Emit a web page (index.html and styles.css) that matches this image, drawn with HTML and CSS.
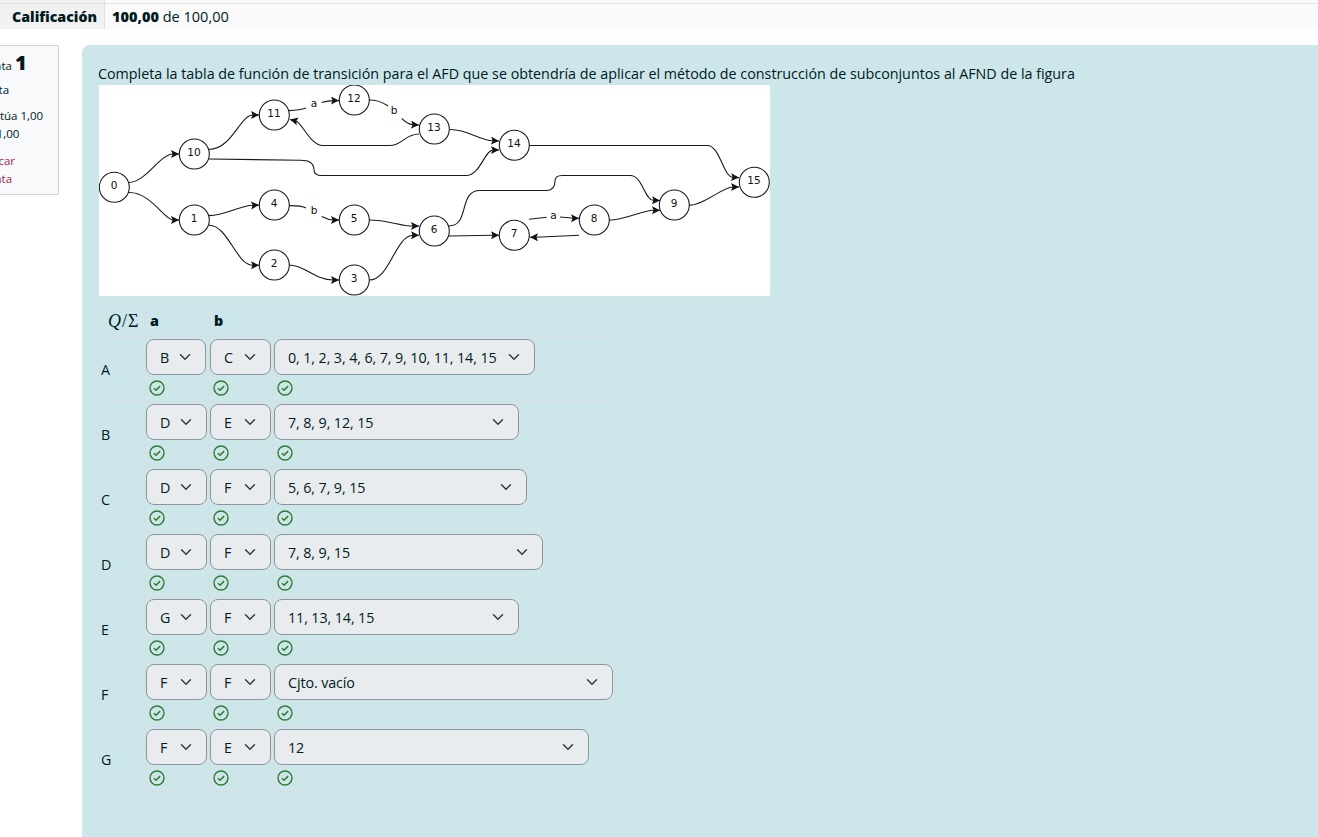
FILE: index.html
```html
<!DOCTYPE html>
<html lang="es">
<head>
    <meta charset="UTF-8">
    <meta name="viewport" content="width=device-width, initial-scale=1.0">
    <title>Calificación</title>
    <link rel="stylesheet" href="styles.css">
</head>
<body>
    <svg class="defs" width="0" height="0" aria-hidden="true">
        <symbol id="ok" viewBox="0 0 16 16">
            <circle cx="8" cy="8" r="7" fill="none" stroke="#357a32" stroke-width="1.4"/>
            <path d="M4.9 8.3 7 10.2 11.1 6.1" fill="none" stroke="#357a32" stroke-width="1.5"/>
        </symbol>
    </svg>

    <div class="summary">
        <div class="summary-row summary-cut">
            <div class="summary-head"></div>
            <div class="summary-value"></div>
        </div>
        <div class="summary-row">
            <div class="summary-head"><b>Calificación</b></div>
            <div class="summary-value"><b>100,00</b> de 100,00</div>
        </div>
    </div>

    <div class="main">
        <div class="info">
            <p class="info-no">Pregunta <b>1</b></p>
            <p>Correcta</p>
            <p>Se puntúa 1,00<br>sobre 1,00</p>
            <p class="flag"><span class="flag-first">Marcar</span><br>pregunta</p>
        </div>

        <div class="formulation">
            <p class="qtext">Completa la tabla de función de transición para el AFD que se obtendría de aplicar el método de construcción de subconjuntos al AFND de la figura</p>

            <svg class="graph" viewBox="99 85 671 211" width="671" height="211">
                <defs>
                    <marker id="arrow" markerUnits="userSpaceOnUse" markerWidth="9" markerHeight="9" refX="8" refY="4" orient="auto">
                        <path d="M0 0 8 4 0 8 1.6 4z" fill="#111"/>
                    </marker>
                </defs>
                <g class="edges">
                    <path marker-end="url(#arrow)" d="M129 182.5C146 182 160 154 173 154H179"/>
                    <path marker-end="url(#arrow)" d="M129 192.5C150 192 165 220 173 220H179"/>
                    <path marker-end="url(#arrow)" d="M209 149.5C232 149 240 115 253 115H259"/>
                    <path marker-end="url(#arrow)" d="M209 159 300 160.3Q314 160 314 170Q314 175.5 322 175.5H467C480 175 485 150 493 150H499"/>
                    <path d="M289 110.6Q300 110 306 108"/>
                    <path marker-end="url(#arrow)" d="M321.6 102.6Q328 100.6 334 100.6H339"/>
                    <path d="M369 100C380 100 385 104 388 106"/>
                    <path marker-end="url(#arrow)" d="M401.7 118.3Q407 124 413 124.7L419 125"/>
                    <path marker-end="url(#arrow)" d="M419 134C405 134 402 145.5 390 145.5H323C310 145 303 124 296 121L290 119.5"/>
                    <path marker-end="url(#arrow)" d="M450 129.5C467 129 480 140.6 493 140.7L499 141"/>
                    <path marker-end="url(#arrow)" d="M529 145.5H707C720 145 723 177 733 177.3L739 177.6"/>
                    <path marker-end="url(#arrow)" d="M209 215.6C225 215.6 240 205.5 253 205.3L259 205"/>
                    <path marker-end="url(#arrow)" d="M209 225.3C228 225 236 265 253 265.3H259"/>
                    <path d="M289 205.6Q302 205.6 306 208"/>
                    <path marker-end="url(#arrow)" d="M321.7 216.6Q328 220 334 220H339"/>
                    <path marker-end="url(#arrow)" d="M289 265C305 265 315 280 333 280H339"/>
                    <path marker-end="url(#arrow)" d="M369 220C388 220 400 226 413 226H419"/>
                    <path marker-end="url(#arrow)" d="M369 280C390 280 395 236 413 235.3H419"/>
                    <path marker-end="url(#arrow)" d="M449 226C470 226 458 190.5 480 190.5H547Q555 190 555 181Q555 175.5 562 175.5H630C642 175 645 200 653 200.3L660 200.5"/>
                    <path marker-end="url(#arrow)" d="M449 236 493 235.3H499"/>
                    <path d="M529 219.3 546.7 217.3"/>
                    <path marker-end="url(#arrow)" d="M560 217 574 218.3H579"/>
                    <path marker-end="url(#arrow)" d="M579 235.3 536 237.3H530"/>
                    <path marker-end="url(#arrow)" d="M609 220.3C625 220 642 210.6 653 210.3H660"/>
                    <path marker-end="url(#arrow)" d="M689 205.3C705 205 722 187 733 187H739"/>
                </g>
                <g class="nodes">
                    <circle cx="114.3" cy="187.3" r="15"/>
                    <circle cx="194.3" cy="154" r="15"/>
                    <circle cx="194.3" cy="220" r="15"/>
                    <circle cx="274.3" cy="115" r="15"/>
                    <circle cx="274.3" cy="205" r="15"/>
                    <circle cx="274.3" cy="265" r="15"/>
                    <circle cx="354.3" cy="100" r="15"/>
                    <circle cx="354.3" cy="220" r="15"/>
                    <circle cx="354.3" cy="280" r="15"/>
                    <circle cx="434.3" cy="129" r="15"/>
                    <circle cx="434.3" cy="231" r="15"/>
                    <circle cx="514.3" cy="145.3" r="15"/>
                    <circle cx="514.3" cy="235.3" r="15"/>
                    <circle cx="594.3" cy="220" r="15"/>
                    <circle cx="674.3" cy="205" r="15"/>
                    <circle cx="754.3" cy="182.3" r="15"/>
                </g>
                <g class="labels">
                    <text x="114" y="189">0</text>
                    <text x="194" y="156">10</text>
                    <text x="194" y="222">1</text>
                    <text x="274" y="117">11</text>
                    <text x="274" y="207">4</text>
                    <text x="274" y="267">2</text>
                    <text x="354" y="102">12</text>
                    <text x="354" y="222">5</text>
                    <text x="354" y="282">3</text>
                    <text x="434" y="131">13</text>
                    <text x="434" y="233">6</text>
                    <text x="514" y="147">14</text>
                    <text x="514" y="237">7</text>
                    <text x="594" y="222">8</text>
                    <text x="674" y="207">9</text>
                    <text x="754" y="184">15</text>
                    <text x="314" y="107">a</text>
                    <text x="394" y="114">b</text>
                    <text x="314" y="214">b</text>
                    <text x="553.5" y="219">a</text>
                </g>
            </svg>

            <table class="answers">
                <colgroup>
                    <col class="col-state">
                    <col class="col-sym">
                    <col class="col-sym">
                    <col class="col-eps">
                </colgroup>
                <tr class="head-row">
                    <th class="math"><i>Q</i>/Σ</th>
                    <th>a</th>
                    <th>b</th>
                    <th></th>
                </tr>
                <tr>
                    <td class="state">A</td>
                    <td><select class="w60"><option>B</option></select><svg class="ok"><use href="#ok"/></svg></td>
                    <td><select class="w61"><option>C</option></select><svg class="ok"><use href="#ok"/></svg></td>
                    <td><select class="w261"><option>0, 1, 2, 3, 4, 6, 7, 9, 10, 11, 14, 15</option></select><svg class="ok"><use href="#ok"/></svg></td>
                </tr>
                <tr>
                    <td class="state">B</td>
                    <td><select class="w61"><option>D</option></select><svg class="ok"><use href="#ok"/></svg></td>
                    <td><select class="w61"><option>E</option></select><svg class="ok"><use href="#ok"/></svg></td>
                    <td><select class="w245"><option>7, 8, 9, 12, 15</option></select><svg class="ok"><use href="#ok"/></svg></td>
                </tr>
                <tr>
                    <td class="state">C</td>
                    <td><select class="w61"><option>D</option></select><svg class="ok"><use href="#ok"/></svg></td>
                    <td><select class="w61"><option>F</option></select><svg class="ok"><use href="#ok"/></svg></td>
                    <td><select class="w253"><option>5, 6, 7, 9, 15</option></select><svg class="ok"><use href="#ok"/></svg></td>
                </tr>
                <tr>
                    <td class="state">D</td>
                    <td><select class="w61"><option>D</option></select><svg class="ok"><use href="#ok"/></svg></td>
                    <td><select class="w61"><option>F</option></select><svg class="ok"><use href="#ok"/></svg></td>
                    <td><select class="w269"><option>7, 8, 9, 15</option></select><svg class="ok"><use href="#ok"/></svg></td>
                </tr>
                <tr>
                    <td class="state">E</td>
                    <td><select class="w61"><option>G</option></select><svg class="ok"><use href="#ok"/></svg></td>
                    <td><select class="w61"><option>F</option></select><svg class="ok"><use href="#ok"/></svg></td>
                    <td><select class="w245"><option>11, 13, 14, 15</option></select><svg class="ok"><use href="#ok"/></svg></td>
                </tr>
                <tr>
                    <td class="state">F</td>
                    <td><select class="w61"><option>F</option></select><svg class="ok"><use href="#ok"/></svg></td>
                    <td><select class="w61"><option>F</option></select><svg class="ok"><use href="#ok"/></svg></td>
                    <td><select class="w339"><option>Cjto. vacío</option></select><svg class="ok"><use href="#ok"/></svg></td>
                </tr>
                <tr>
                    <td class="state">G</td>
                    <td><select class="w61"><option>F</option></select><svg class="ok"><use href="#ok"/></svg></td>
                    <td><select class="w61"><option>E</option></select><svg class="ok"><use href="#ok"/></svg></td>
                    <td><select class="w315"><option>12</option></select><svg class="ok"><use href="#ok"/></svg></td>
                </tr>
            </table>
        </div>
    </div>
</body>
</html>
```

FILE: styles.css
```css
html, body {
    height: 100%;
    overflow: hidden;
}

body {
    margin: 0;
    font-family: "Open Sans", "Noto Sans", sans-serif;
    font-size: 14.3px;
    line-height: 22px;
    color: #001a1e;
    background: #fff;
}

.defs {
    position: absolute;
}

/* attempt summary */
.summary {
    border-bottom: 1px solid #dee2e6;
}

.summary-row {
    display: grid;
    grid-template-columns: 105px 1fr;
    height: 24px;
    border-top: 1px solid #dee2e6;
    line-height: 25px;
}

.summary-cut {
    height: 3px;
    border-top: 0;
}

.summary-head {
    padding-left: 12px;
    background: #f1f1f1;
    border-right: 1px solid #dee2e6;
    font-size: 14.2px;
    font-weight: 800;
}

.summary-value {
    padding-left: 7px;
    background: #fafafa;
    font-size: 14.5px;
}

.summary-value b {
    font-weight: 800;
}

/* question */
.main {
    display: flex;
    align-items: flex-start;
    gap: 23px;
    margin: 16px -20px 0 -45px;
}

.info {
    flex: none;
    box-sizing: border-box;
    width: 104px;
    height: 150px;
    padding: 8px 7px;
    background: #f8f9fa;
    border: 1px solid #ced4da;
    border-radius: 2px;
    font-size: 11.5px;
    line-height: 18px;
}

.info p {
    margin: 0 0 8px;
}

.info-no {
    height: 19px;
}

.info-no b {
    font-size: 20px;
    font-weight: 800;
}

.flag {
    padding-top: 1px;
    color: #a6244a;
}

.flag-first {
    padding-left: 14px;
}

.formulation {
    flex: 1;
    height: 800px;
    padding: 17px 16px 0;
    background: #cce6ea;
    border-radius: 8px;
}

.qtext {
    margin: 0;
    height: 23px;
    line-height: 23px;
}

.graph {
    display: block;
    margin-left: 1px;
    background: #fff;
}

.edges path {
    fill: none;
    stroke: #1a1a1a;
    stroke-width: 1.1;
}

.nodes circle {
    fill: #fff;
    stroke: #1a1a1a;
    stroke-width: 1.1;
}

.labels text {
    font-family: "DejaVu Sans", sans-serif;
    font-size: 10.5px;
    text-anchor: middle;
    fill: #111;
}

/* transition table */
.answers {
    table-layout: fixed;
    width: 516px;
    margin: 7px 0 0 1px;
    border-collapse: collapse;
}

.col-state { width: 46px; }
.col-sym { width: 64px; }
.col-eps { width: 342px; }

.answers th, .answers td {
    padding: 2px 1px 0 0;
    border: 1px solid #d3dfe5;
    vertical-align: top;
}

.head-row {
    height: 33px;
}

.answers th {
    padding: 6px 0 0 4px;
    text-align: left;
    font-weight: 800;
}

.answers .math {
    padding-left: 8px;
    font-family: "Liberation Serif", serif;
    font-size: 18px;
    font-weight: 400;
    letter-spacing: 1px;
    white-space: nowrap;
}

.answers .state {
    padding: 2px 0 0 1px;
    vertical-align: middle;
}

.answers td {
    height: 62px;
}

select {
    display: block;
    appearance: none;
    box-sizing: border-box;
    height: 36px;
    margin: 0;
    padding: 2px 30px 0 13px;
    color: #001a1e;
    font: inherit;
    letter-spacing: -0.1px;
    background-color: #e9ecef;
    background-image: url("data:image/svg+xml,%3csvg xmlns='http://www.w3.org/2000/svg' viewBox='0 0 16 16'%3e%3cpath fill='none' stroke='%23343a40' stroke-linecap='round' stroke-width='2' d='m2 5 6 6 6-6'/%3e%3c/svg%3e");
    background-repeat: no-repeat;
    background-position: right 14px center;
    background-size: 12px 12px;
    border: 1px solid #8f959e;
    border-radius: 8px;
}

.w60 { width: 60px; }
.w61 { width: 61px; }
.w245 { width: 245px; }
.w253 { width: 253px; }
.w261 { width: 261px; }
.w269 { width: 269px; }
.w315 { width: 315px; }
.w339 { width: 339px; }

.ok {
    display: block;
    width: 16px;
    height: 16px;
    margin: 5px 0 0 3px;
}
```
